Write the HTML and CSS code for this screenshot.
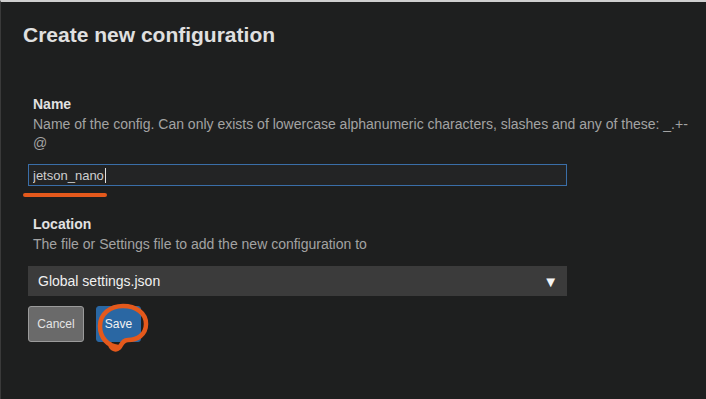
FILE: index.html
```html
<!DOCTYPE html>
<html lang="en">
<head>
    <meta charset="utf-8" />
    <title>Create new configuration</title>
    <link rel="stylesheet" href="styles.css">
</head>
<body>
<div class="dialog">
    <h1 class="title">Create new configuration</h1>

    <form class="form">
        <div class="field">
            <label class="label" for="name">Name</label>
            <p class="desc">Name of the config. Can only exists of lowercase alphanumeric characters, slashes and any of these: _.+-@</p>
            <div class="input-wrap">
                <input id="name" class="text-input" type="text" value="jetson_nano" />
                <span class="caret"></span>
                <span class="mark-underline"></span>
            </div>
        </div>

        <div class="field field-location">
            <label class="label" for="location">Location</label>
            <p class="desc">The file or Settings file to add the new configuration to</p>
            <div class="select">
                <span id="location">Global settings.json</span>
                <span class="arrow">&#9660;</span>
            </div>
        </div>

        <div class="buttons">
            <button type="button" class="btn btn-cancel">Cancel</button>
            <button type="button" class="btn btn-save">Save
                <svg class="mark-circle" width="60" height="52" viewBox="0 0 60 52">
                    <path d="M24 45 C14 44 6 36 6 24 C6 12 16 4 29 4 C42 4 52 11 52 22 C52 33 43 38 34 38 C29 38 28 42 25 46 C22 49 17 47 16 42"
                          fill="none" stroke="#e4591c" stroke-width="4.5" stroke-linecap="round" stroke-linejoin="round"/>
                </svg>
            </button>
        </div>
    </form>
</div>
</body>
</html>
```

FILE: styles.css
```css
body{margin:0;background:#1e1f1f;border-top:2px solid #cfcfcf;border-left:1px solid #3a3a3a;font-family:"Liberation Sans",Arial,sans-serif;color:#d6d6d6;height:397px;overflow:hidden}
.dialog{padding:0 22px}
.title{margin:0;padding-top:21px;font-size:21px;line-height:24px;font-weight:bold;color:#e0e0e0}
.form{padding:49px 0 0 5px}
.field{margin-bottom:20px}
.label{display:block;padding-left:5px;font-size:14px;line-height:17px;font-weight:bold;color:#e2e2e2}
.desc{margin:2px 0 11px;padding-left:5px;width:655px;font-size:14px;line-height:19px;color:#a3a3a3}
.input-wrap{position:relative;display:flex;align-items:center;width:539px}
.text-input{box-sizing:border-box;width:100%;height:22px;margin:0;padding:0 4px;background:#232425;border:1px solid #3a6ea8;color:#cfcfcf;font-family:"Liberation Sans",Arial,sans-serif;font-size:13px;outline:none}
.caret{position:absolute;left:77px;top:4px;width:1px;height:15px;background:#e0e0e0}
.mark-underline{position:absolute;left:-5px;top:29px;width:84px;height:4px;border-radius:3px;background:#e4591c}
.field-location{margin-top:30px}
.desc + .select{margin-top:12px}
.select{display:flex;justify-content:space-between;align-items:center;width:539px;height:30px;box-sizing:border-box;padding:0 9px 0 10px;background:#3b3b3b;color:#f0f0f0;font-size:14px}
.arrow{font-size:15px;color:#f4f4f4}
.buttons{display:flex;gap:12px;margin-top:-10px}
.btn{position:relative;height:36px;padding:0;border-radius:3px;font-family:"Liberation Sans",Arial,sans-serif;font-size:12px}
.btn-cancel{width:56px;background:#6a6a6a;border:1px solid #9b9b9b;color:#e4e4e4}
.btn-save{width:45px;background:#2a67a3;border:1px solid #2a67a3;color:#f2f2f2}
.mark-circle{position:absolute;left:-3px;top:-5px}
```
